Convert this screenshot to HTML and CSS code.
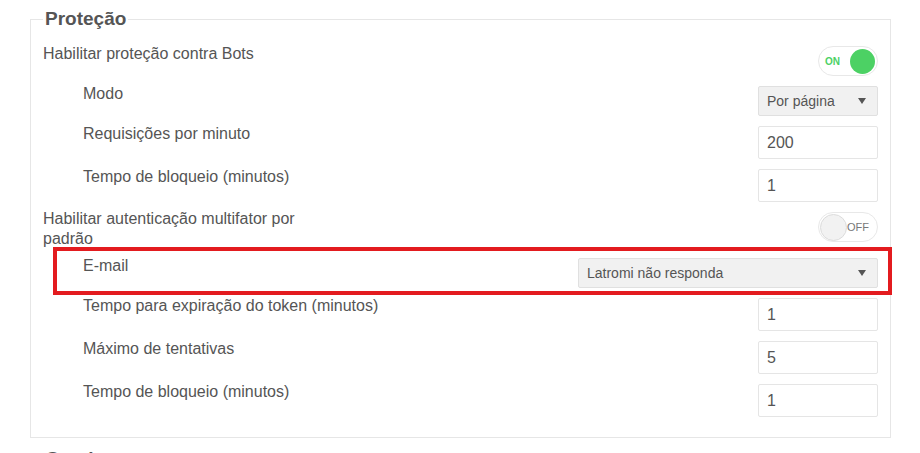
FILE: index.html
```html
<!DOCTYPE html>
<html lang="pt-BR">
<head>
  <meta charset="UTF-8" />
  <meta name="viewport" content="width=device-width, initial-scale=1.0"/>
  <title>Configurações</title>
  <link rel="stylesheet" href="styles.css">
</head>
<body>

  <div class="page">
    <fieldset class="group">
      <legend>Proteção</legend>

      <div class="row">
        <span class="label">Habilitar proteção contra Bots</span>
        <div class="switch on"><span class="switch-text">ON</span><span class="knob"></span></div>
      </div>

      <div class="row sub">
        <span class="label">Modo</span>
        <div class="select small">
          <select>
            <option>Por página</option>
            <option>Por IP</option>
          </select>
        </div>
      </div>

      <div class="row sub">
        <span class="label">Requisições por minuto</span>
        <input class="field" type="text" value="200" />
      </div>

      <div class="row sub">
        <span class="label">Tempo de bloqueio (minutos)</span>
        <input class="field" type="text" value="1" />
      </div>

      <div class="row">
        <span class="label narrow">Habilitar autenticação multifator por padrão</span>
        <div class="switch off"><span class="knob"></span><span class="switch-text">OFF</span></div>
      </div>

      <div class="row sub marked">
        <span class="label">E-mail</span>
        <div class="select wide">
          <select>
            <option>Latromi não responda</option>
          </select>
        </div>
        <div class="mark"></div>
      </div>

      <div class="row sub">
        <span class="label">Tempo para expiração do token (minutos)</span>
        <input class="field" type="text" value="1" />
      </div>

      <div class="row sub">
        <span class="label">Máximo de tentativas</span>
        <input class="field" type="text" value="5" />
      </div>

      <div class="row sub">
        <span class="label">Tempo de bloqueio (minutos)</span>
        <input class="field" type="text" value="1" />
      </div>
    </fieldset>

    <fieldset class="group">
      <legend>Geral</legend>
    </fieldset>
  </div>

</body>
</html>
```

FILE: styles.css
```css
body {
  font-family: 'Liberation Sans', Arial, sans-serif;
  color: #555;
  background: #fff;
  margin: 0;
  overflow: hidden;
}
.page {
  padding: 0 29px 0 30px;
}
.group {
  border: 1px solid #e6e6e6;
  margin: 8px 0 10px;
  padding: 16px 12px 20px 12px;
  min-width: 0;
}
.group legend {
  font-size: 19px;
  font-weight: bold;
  line-height: 22px;
  padding: 0 2px;
  color: #555;
}
.row {
  display: flex;
  justify-content: space-between;
  align-items: flex-start;
  margin-bottom: 10px;
}
.row:last-child {
  margin-bottom: 0;
}
.label {
  font-size: 16px;
  line-height: 20px;
  margin-top: -2px;
}
.label.narrow {
  width: 265px;
  margin-top: -3px;
  margin-bottom: -1px;
}
.sub .label {
  padding-left: 40px;
}
.field {
  width: 120px;
  height: 33px;
  box-sizing: border-box;
  border: 1px solid #e5e5e5;
  border-radius: 2px;
  padding: 0 8px;
  font-family: inherit;
  font-size: 16px;
  color: #555;
  outline: none;
}
.select {
  position: relative;
  height: 30px;
}
.select.small {
  width: 120px;
}
.select.wide {
  width: 300px;
}
.select select {
  appearance: none;
  -webkit-appearance: none;
  width: 100%;
  height: 100%;
  border: 1px solid #e0e0e0;
  border-radius: 2px;
  background: #f1f1f1;
  padding: 0 8px;
  font-family: inherit;
  font-size: 14px;
  color: #555;
  outline: none;
}
.select::after {
  content: "";
  position: absolute;
  right: 12px;
  top: 12px;
  border-left: 4px solid transparent;
  border-right: 4px solid transparent;
  border-top: 6px solid #555;
  pointer-events: none;
}
.switch {
  width: 60px;
  height: 30px;
  box-sizing: border-box;
  border: 1px solid #e8e8e8;
  border-radius: 15px;
  display: flex;
  align-items: center;
  justify-content: space-between;
  padding: 0 2px 0 6px;
  background: #fff;
}
.switch.on .knob {
  width: 25px;
  height: 25px;
  border-radius: 50%;
  background: #4cd164;
}
.switch.on .switch-text {
  color: #4cd164;
  font-size: 10px;
  font-weight: bold;
}
.switch.off {
  padding: 0 8px 0 1px;
}
.switch.off .knob {
  width: 25px;
  height: 25px;
  border-radius: 50%;
  background: #f2f2f2;
  border: 1px solid #dcdcdc;
}
.switch.off .switch-text {
  color: #777;
  font-size: 11px;
}
.marked {
  position: relative;
}
/* annotation frame drawn over the row */
.mark {
  position: absolute;
  left: 10px;
  right: -14px;
  top: -11px;
  bottom: -7px;
  border: 4px solid #e31b1f;
  pointer-events: none;
}
```
